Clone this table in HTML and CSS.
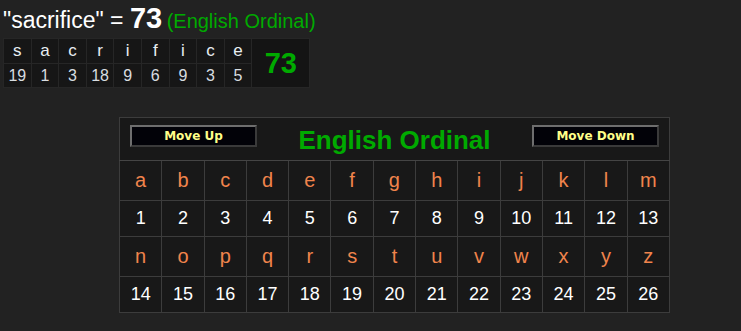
FILE: index.html
```html
<!DOCTYPE html>
<html>
<head>
<meta charset="utf-8">
<link rel="stylesheet" href="styles.css">
</head>
<body>
<div class="headline"><span class="word">"sacrifice" = </span><span class="sum">73</span> <span class="cipher">(English Ordinal)</span></div>
<table class="breakdown">
  <tr>
    <td class="bl">s</td><td class="bl">a</td><td class="bl">c</td><td class="bl">r</td><td class="bl">i</td><td class="bl">f</td><td class="bl">i</td><td class="bl">c</td><td class="bl">e</td>
    <td class="btotal" rowspan="2">73</td>
  </tr>
  <tr>
    <td class="bn">19</td><td class="bn">1</td><td class="bn">3</td><td class="bn">18</td><td class="bn">9</td><td class="bn">6</td><td class="bn">9</td><td class="bn">3</td><td class="bn">5</td>
  </tr>
</table>

<table class="chart">
  <tr>
    <td class="chart-head" colspan="13">
      <div class="head-row">
        <button class="move">Move Up</button>
        <span class="title">English Ordinal</span>
        <button class="move">Move Down</button>
      </div>
    </td>
  </tr>
  <tr class="letters"><td>a</td><td>b</td><td>c</td><td>d</td><td>e</td><td>f</td><td>g</td><td>h</td><td>i</td><td>j</td><td>k</td><td>l</td><td>m</td></tr>
  <tr class="nums"><td>1</td><td>2</td><td>3</td><td>4</td><td>5</td><td>6</td><td>7</td><td>8</td><td>9</td><td>10</td><td>11</td><td>12</td><td>13</td></tr>
  <tr class="letters"><td>n</td><td>o</td><td>p</td><td>q</td><td>r</td><td>s</td><td>t</td><td>u</td><td>v</td><td>w</td><td>x</td><td>y</td><td>z</td></tr>
  <tr class="nums"><td>14</td><td>15</td><td>16</td><td>17</td><td>18</td><td>19</td><td>20</td><td>21</td><td>22</td><td>23</td><td>24</td><td>25</td><td>26</td></tr>
</table>
</body>
</html>
```

FILE: styles.css
```css
html, body {
  margin: 0;
  background: #222222;
}
body {
  padding: 3px;
  font-family: "Liberation Sans", Arial, sans-serif;
  color: #ffffff;
}
.headline {
  height: 34px;
  line-height: 34px;
  white-space: nowrap;
  margin-top: -2px;
}
.word {
  font-size: 23px;
  color: #ffffff;
}
.sum {
  font-size: 29px;
  font-weight: bold;
  color: #ffffff;
}
.cipher {
  font-size: 20px;
  color: #00aa00;
}
.breakdown {
  border-collapse: collapse;
  margin-top: 3px;
  background: #161616;
}
.breakdown td {
  border: 1px solid #262626;
  text-align: center;
  padding: 0;
  width: 26.6px;
}
.bl {
  height: 24px;
  font-size: 17px;
  color: #e8eef2;
}
.bn {
  height: 23px;
  font-size: 16px;
  color: #d8dde0;
}
.breakdown td.btotal {
  width: 57px;
  font-size: 29px;
  font-weight: bold;
  color: #00aa00;
  background: #141414;
}
.chart {
  border-collapse: collapse;
  margin: 29px 0 0 116px;
  background: #181818;
  border: 1px solid #464646;
  table-layout: fixed;
  width: 551px;
}
.chart td {
  border: 1px solid #3c3c3c;
  padding: 0;
  text-align: center;
}
.chart td.chart-head {
  height: 42px;
  border-bottom: 1px solid #444444;
}
.head-row {
  display: flex;
  align-items: center;
  justify-content: space-between;
  padding: 0 10px;
  height: 42px;
}
.move {
  width: 127px;
  height: 22px;
  margin-top: -7px;
  background: #020208;
  border: 2px solid;
  border-color: #6e6e6e #3a3a3a #3a3a3a #6e6e6e;
  color: #ffff88;
  font-family: "DejaVu Sans", Verdana, sans-serif;
  font-size: 12px;
  font-weight: bold;
  padding: 0;
}
.title {
  font-size: 26px;
  font-weight: bold;
  color: #00aa00;
  margin-top: 3px;
}
.letters td {
  height: 39px;
  font-size: 20px;
  color: #f0844c;
}
.nums td {
  height: 35px;
  font-size: 18px;
  color: #ffffff;
}
```
